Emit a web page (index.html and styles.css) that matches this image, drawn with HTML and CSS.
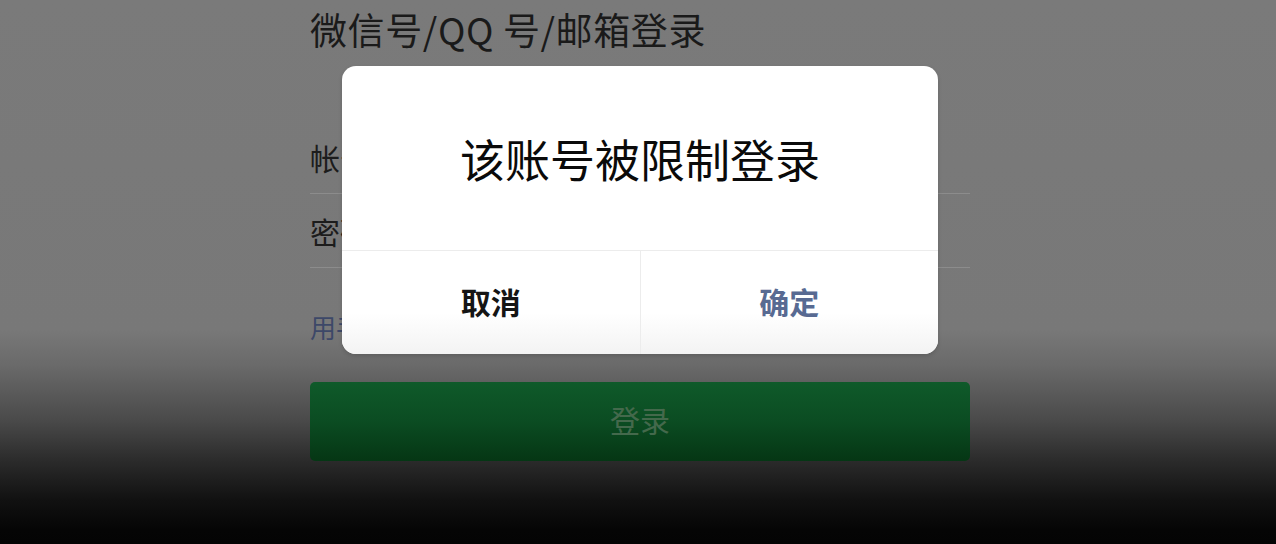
FILE: index.html
```html
<!DOCTYPE html>
<html lang="zh-CN">
<head>
<meta charset="utf-8">
<title>微信号/QQ号/邮箱登录</title>
<link rel="stylesheet" href="styles.css">
</head>
<body>
<main class="page">
  <h1 class="title">微信号/QQ 号/邮箱登录</h1>
  <div class="row"><span class="label">帐号</span></div>
  <div class="row"><span class="label">密码</span></div>
  <a class="link">用手机号登录</a>
  <div class="login-btn">登录</div>
</main>
<div class="overlay">
  <div class="dialog">
    <div class="dialog-body">该账号被限制登录</div>
    <div class="dialog-actions">
      <div class="action cancel">取消</div>
      <div class="action confirm">确定</div>
    </div>
  </div>
</div>
</body>
</html>
```
FILE: styles.css
```css
html, body {
  margin: 0;
  padding: 0;
}
body {
  width: 1276px;
  height: 544px;
  overflow: hidden;
  position: relative;
  font-family: "Noto Sans CJK SC", "Noto Sans", sans-serif;
  background: linear-gradient(to bottom, #7a7a7a 0px, #787878 330px, #6a6a6a 365px, #4a4a4a 420px, #2a2a2a 462px, #111111 500px, #050505 530px, #040404 544px);
}
.page {
  width: 660px;
  margin: 0 auto;
  padding-top: 7px;
  transform: translateX(2px);
  display: flex;
  flex-direction: column;
}
.title {
  margin: 0;
  font-size: 37px;
  font-weight: 400;
  line-height: 44px;
  letter-spacing: 0.6px;
  white-space: pre;
  color: #1a1a1a;
}
.row {
  height: 73px;
  border-bottom: 1px solid #8c8c8c;
  display: flex;
  align-items: center;
}
.title + .row {
  margin-top: 69px;
}
.label {
  font-size: 30px;
  color: #1c1c1c;
}
.link {
  margin-top: 41px;
  font-size: 26px;
  line-height: 36px;
  color: #3d4868;
}
.login-btn {
  margin-top: 37px;
  height: 79px;
  box-sizing: border-box;
  padding-bottom: 5px;
  border-radius: 5px;
  background: linear-gradient(to bottom, #0f5a2a 0%, #0b4c22 50%, #053614 100%);
  display: flex;
  align-items: center;
  justify-content: center;
  font-size: 30px;
  color: #44694c;
}
.overlay {
  position: absolute;
  top: 0;
  left: 0;
  right: 0;
  bottom: 0;
  display: flex;
  justify-content: center;
  align-items: flex-start;
  padding-top: 66px;
  padding-left: 4px;
}
.dialog {
  width: 596px;
  height: 288px;
  background: #ffffff;
  border-radius: 14px;
  overflow: hidden;
  display: flex;
  flex-direction: column;
  box-shadow: 0 2px 4px rgba(0,0,0,0.15);
}
.dialog-body {
  height: 185px;
  box-sizing: border-box;
  padding-top: 0;
  border-bottom: 1px solid #ececec;
  display: flex;
  align-items: center;
  justify-content: center;
  font-size: 45px;
  color: #0a0a0a;
}
.dialog-actions {
  flex: 1;
  display: flex;
  background: linear-gradient(to bottom, #ffffff 0%, #ffffff 60%, #f3f3f3 100%);
}
.action {
  flex: 1;
  display: flex;
  align-items: center;
  justify-content: center;
  box-sizing: border-box;
  padding-bottom: 4px;
  font-size: 30px;
  font-weight: 700;
}
.cancel {
  color: #151515;
  border-right: 1px solid #ececec;
}
.confirm {
  color: #586a92;
}
```
